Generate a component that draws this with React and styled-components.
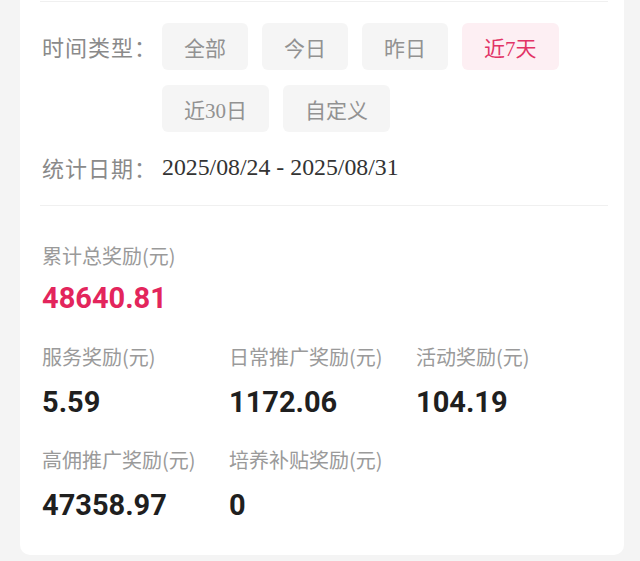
import React, { useState } from 'react';
import styled, { createGlobalStyle } from 'styled-components';

const GlobalStyle = createGlobalStyle`
    html, body {
        margin: 0;
        padding: 0;
        background-color: #f4f4f4;
    }
    body {
        font-family: "Noto Sans CJK SC", "Noto Sans", sans-serif;
    }
`;

const Page = styled.div`
    padding: 0 16px 9px 20px;
`;

const Card = styled.div`
    background-color: #fff;
    border-radius: 0 0 10px 10px;
    padding: 1px 16px 32px 22px;
`;

const Divider = styled.div`
    height: 1px;
    margin-left: -2px;
    background-color: #f0f0f0;
`;

const FilterRow = styled.div`
    display: flex;
    align-items: flex-start;
    margin-top: 21px;
`;

const RowLabel = styled.div`
    flex: 0 0 120px;
    font-size: 22px;
    letter-spacing: 1px;
    line-height: ${props => props.tall ? '47px' : '30px'};
    color: #8a8a8a;
    white-space: nowrap;
`;

const ChipList = styled.div`
    flex: 1;
    display: flex;
    flex-wrap: wrap;
    gap: 15px 14px;
`;

const Chip = styled.button`
    height: 47px;
    padding: 0 22px;
    border: 0;
    border-radius: 6px;
    font-family: "Liberation Serif", "Noto Sans CJK SC", serif;
    font-size: 21px;
    cursor: pointer;
    background-color: ${props => props.active ? '#fdeff3' : '#f5f5f5'};
    color: ${props => props.active ? '#e23466' : '#929292'};
`;

const DateRow = styled.div`
    display: flex;
    align-items: center;
    margin: 20px 0 23px;
`;

const DateText = styled.div`
    font-family: "Liberation Serif", serif;
    font-size: 23.8px;
    line-height: 30px;
    color: #333;
`;

const Stats = styled.div`
    padding-top: 36px;
`;

const Stat = styled.div`
    display: flex;
    flex-direction: column;
    gap: ${props => props.gap}px;
`;

const StatLabel = styled.div`
    font-size: 20px;
    line-height: 28px;
    color: #9a9a9a;
    white-space: nowrap;
`;

const StatValue = styled.div`
    font-family: Roboto, "Liberation Sans", sans-serif;
    font-weight: bold;
    font-size: 29px;
    line-height: 36px;
    color: ${props => props.accent ? '#e3255c' : '#1f1f1f'};
`;

const StatGrid = styled.div`
    display: grid;
    grid-template-columns: repeat(3, 187px);
    row-gap: 26px;
    margin-top: 27px;
`;

const chips = ['全部', '今日', '昨日', '近7天', '近30日', '自定义'];

const stats = [
    { label: '服务奖励(元)', value: '5.59' },
    { label: '日常推广奖励(元)', value: '1172.06' },
    { label: '活动奖励(元)', value: '104.19' },
    { label: '高佣推广奖励(元)', value: '47358.97' },
    { label: '培养补贴奖励(元)', value: '0' },
];

export default function App() {
    const [range, setRange] = useState('近7天');

    return (
        <Page>
            <GlobalStyle />
            <Card>
                <Divider />
                <FilterRow>
                    <RowLabel tall>时间类型：</RowLabel>
                    <ChipList>
                        {chips.map(c => (
                            <Chip key={c} active={c === range} onClick={() => setRange(c)}>
                                {c}
                            </Chip>
                        ))}
                    </ChipList>
                </FilterRow>
                <DateRow>
                    <RowLabel>统计日期：</RowLabel>
                    <DateText>2025/08/24 - 2025/08/31</DateText>
                </DateRow>
                <Divider />
                <Stats>
                    <Stat gap={10}>
                        <StatLabel>累计总奖励(元)</StatLabel>
                        <StatValue accent>48640.81</StatValue>
                    </Stat>
                    <StatGrid>
                        {stats.map(s => (
                            <Stat key={s.label} gap={13}>
                                <StatLabel>{s.label}</StatLabel>
                                <StatValue>{s.value}</StatValue>
                            </Stat>
                        ))}
                    </StatGrid>
                </Stats>
            </Card>
        </Page>
    );
}
